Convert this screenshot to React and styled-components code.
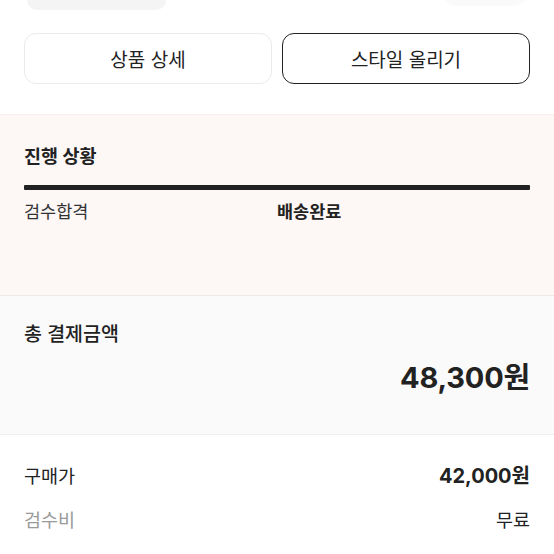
import React from 'react';
import styled, { createGlobalStyle } from 'styled-components';

const GlobalStyle = createGlobalStyle`
  html, body {
    margin: 0;
    padding: 0;
    background: #ffffff;
    font-family: Inter, 'Noto Sans CJK KR', sans-serif;
    color: #222222;
    overflow: hidden;
  }
  * { box-sizing: border-box; }
`;

const Page = styled.div`
  width: 554px;
  height: 554px;
  overflow: hidden;
`;

const TopStrip = styled.div`
  display: flex;
  justify-content: space-between;
  padding: 0 24px 0 27px;
  height: 33px;
`;

const Chip = styled.div`
  width: 139px;
  height: 40px;
  margin-top: -30px;
  background: #f4f4f4;
  border-radius: 10px;
`;

const Blob = styled.div`
  width: 90px;
  height: 18px;
  margin-top: -12px;
  background: #fafafa;
  border-radius: 0 0 40px 40px;
`;

const ButtonRow = styled.div`
  display: grid;
  grid-template-columns: 1fr 1fr;
  gap: 10px;
  padding: 0 24px;
`;

const ActionButton = styled.button`
  height: 51px;
  border-radius: 12px;
  background: #fff;
  border: 1px solid ${p => (p.$dark ? '#222222' : '#ebebeb')};
  font-family: inherit;
  font-size: 19px;
  color: #222;
  cursor: pointer;
`;

const ProgressSection = styled.section`
  margin-top: 30px;
  height: 182px;
  background: #fdf7f5;
  border-top: 1px solid #f6f0ee;
  border-bottom: 1px solid #eeeaea;
  padding: 29px 24px 0;
`;

const SectionTitle = styled.h2`
  margin: 0;
  font-size: ${p => p.$size || 18.5}px;
  font-weight: ${p => p.$weight || 700};
  line-height: 24px;
`;

const Bar = styled.div`
  height: 5px;
  background: #222;
  border-radius: 1px;
  margin-top: 17px;
`;

const StepRow = styled.div`
  display: grid;
  grid-template-columns: 1fr 1fr;
  margin-top: 10px;
  font-size: 17.5px;
  line-height: 24px;
`;

const Step = styled.span`
  font-weight: ${p => (p.$active ? 700 : 400)};
  color: ${p => (p.$active ? '#222' : '#333')};
`;

const TotalSection = styled.section`
  height: 139px;
  background: #fafafa;
  border-bottom: 1px solid #efefef;
  padding: 26px 24px 0;
`;

const TotalAmount = styled.div`
  text-align: right;
  margin-top: 14px;
  font-size: 29px;
  font-weight: 700;
  line-height: 36px;
  letter-spacing: -0.2px;
`;

const PriceList = styled.div`
  padding: 29px 24px 0;
  display: flex;
  flex-direction: column;
  gap: 20px;
`;

const PriceRow = styled.div`
  display: flex;
  justify-content: space-between;
  font-size: 18.5px;
  line-height: 24px;
`;

const PriceLabel = styled.span`
  color: ${p => (p.$muted ? '#9a9a9a' : '#222')};
`;

const PriceValue = styled.span`
  font-weight: ${p => (p.$bold ? 700 : 400)};
  font-size: ${p => (p.$bold ? 20 : 18.5)}px;
`;

export default function App() {
  return (
    <Page>
      <GlobalStyle />
      <TopStrip>
        <Chip />
        <Blob />
      </TopStrip>
      <ButtonRow>
        <ActionButton>상품 상세</ActionButton>
        <ActionButton $dark>스타일 올리기</ActionButton>
      </ButtonRow>
      <ProgressSection>
        <SectionTitle>진행 상황</SectionTitle>
        <Bar />
        <StepRow>
          <Step>검수합격</Step>
          <Step $active>배송완료</Step>
        </StepRow>
      </ProgressSection>
      <TotalSection>
        <SectionTitle $size={19.5} $weight={500}>총 결제금액</SectionTitle>
        <TotalAmount>48,300원</TotalAmount>
      </TotalSection>
      <PriceList>
        <PriceRow>
          <PriceLabel>구매가</PriceLabel>
          <PriceValue $bold>42,000원</PriceValue>
        </PriceRow>
        <PriceRow>
          <PriceLabel $muted>검수비</PriceLabel>
          <PriceValue>무료</PriceValue>
        </PriceRow>
        <PriceRow>
          <PriceLabel $muted>수수료</PriceLabel>
          <PriceValue>6,300원</PriceValue>
        </PriceRow>
      </PriceList>
    </Page>
  );
}
